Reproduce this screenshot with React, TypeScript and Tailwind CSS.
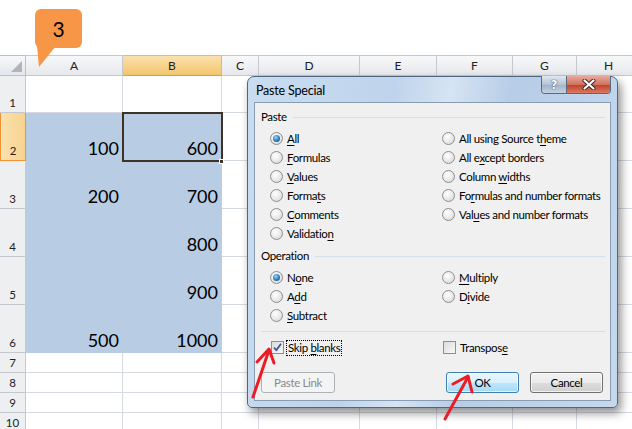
import React from "react";

const colHeads = ["A", "B", "C", "D", "E", "F", "G", "H"];
const rowHeads = [1, 2, 3, 4, 5, 6, 7, 8, 9, 10];

const data: Record<string, string> = {
  A2: "100",
  A3: "200",
  A6: "500",
  B2: "600",
  B3: "700",
  B4: "800",
  B5: "900",
  B6: "1000",
};

function Acc({ text, u }: { text: string; u?: number }) {
  if (u === undefined) return <>{text}</>;
  return (
    <>
      {text.slice(0, u)}
      <span className="underline decoration-1 underline-offset-[2px]">{text[u]}</span>
      {text.slice(u + 1)}
    </>
  );
}

function Radio({ checked }: { checked?: boolean }) {
  return (
    <span className="flex h-[13px] w-[13px] shrink-0 items-center justify-center rounded-full border border-[#8e8f8f] bg-[radial-gradient(circle_at_40%_35%,#ffffff,#e8e8e8_55%,#cfcfcf)]">
      {checked && (
        <span className="h-[7px] w-[7px] rounded-full bg-[radial-gradient(circle_at_40%_35%,#9ad6f7,#2b7bbb_55%,#164c82)]" />
      )}
    </span>
  );
}

function Check({ checked }: { checked?: boolean }) {
  return (
    <span className="flex h-[13px] w-[13px] shrink-0 items-center justify-center border border-[#8e8f8f] bg-[linear-gradient(135deg,#dcdcdc,#f8f8f8)]">
      {checked && (
        <svg width="11" height="11" viewBox="0 0 11 11">
          <path d="M2 5.5 L4.3 8.3 L9 1.8" fill="none" stroke="#3c5796" strokeWidth="1.8" strokeLinejoin="round" />
        </svg>
      )}
    </span>
  );
}

function RadioRow({ text, u, checked }: { text: string; u?: number; checked?: boolean }) {
  return (
    <div className="flex h-[19px] items-center gap-[4px]">
      <Radio checked={checked} />
      <span className="whitespace-nowrap">
        <Acc text={text} u={u} />
      </span>
    </div>
  );
}

function GroupLabel({ text }: { text: string }) {
  return (
    <div className="flex h-[16px] items-center pr-[5px]">
      <span>{text}</span>
      <span className="ml-[6px] h-px flex-1 bg-[#d5dfe5]" />
    </div>
  );
}

function PasteSpecial() {
  return (
    <div className="absolute left-[247px] top-[76px] flex h-[332px] w-[371px] flex-col rounded-t-[7px] rounded-b-[5px] border border-[#4f6580] bg-[linear-gradient(100deg,#c9dcf0_0%,#bfd4ec_35%,#d6e4f3_48%,#b7cde7_62%,#c5d8ee_100%)] px-[6px] pb-[6px] font-['Lato',sans-serif] text-black shadow-[3px_5px_10px_rgba(0,0,0,0.45)]">
      <div className="flex h-[25px] items-start justify-between">
        <span className="pl-[2px] pt-[5px] text-[12.5px] tracking-[-0.2px]">Paste Special</span>
        <div className="-mt-px flex overflow-hidden rounded-b-[4px] border border-t-0 border-[#5b6b7e]">
          <span className="flex h-[17px] w-[25px] items-center justify-center border-r border-[#5b6b7e] bg-[linear-gradient(#dfe7f0,#b4c4d6_50%,#9fb2c8_51%,#c4d3e3)] font-['DejaVu_Sans',sans-serif] text-[12px] font-bold text-white [text-shadow:0_0_1px_#2d3a4a,0_0_1px_#2d3a4a]">
            ?
          </span>
          <span className="flex h-[17px] w-[43px] items-center justify-center bg-[linear-gradient(#e8a99c,#d0725f_50%,#c0402a_51%,#d97a5f)]">
            <svg width="14" height="11" viewBox="0 0 14 11">
              <path d="M2.5 1.5 L11.5 9.5 M11.5 1.5 L2.5 9.5" stroke="#3a2320" strokeWidth="4" strokeLinecap="round" />
              <path d="M2.5 1.5 L11.5 9.5 M11.5 1.5 L2.5 9.5" stroke="#ffffff" strokeWidth="2.2" strokeLinecap="round" />
            </svg>
          </span>
        </div>
      </div>
      <div className="flex flex-1 flex-col border border-[#8a9cb2] bg-[#f0f0f0] pl-[6px] pt-[6px] text-[11.5px] tracking-[-0.35px]">
        <GroupLabel text="Paste" />
        <div className="mt-[4px] grid grid-cols-[172px_1fr] pl-[9px]">
          <div className="flex flex-col">
            <RadioRow text="All" u={0} checked />
            <RadioRow text="Formulas" u={0} />
            <RadioRow text="Values" u={0} />
            <RadioRow text="Formats" u={5} />
            <RadioRow text="Comments" u={0} />
            <RadioRow text="Validation" u={9} />
          </div>
          <div className="flex flex-col">
            <RadioRow text="All using Source theme" u={18} />
            <RadioRow text="All except borders" u={5} />
            <RadioRow text="Column widths" u={7} />
            <RadioRow text="Formulas and number formats" u={2} />
            <RadioRow text="Values and number formats" u={3} />
          </div>
        </div>
        <div className="mt-[5px]">
          <GroupLabel text="Operation" />
        </div>
        <div className="mt-[4px] grid grid-cols-[172px_1fr] pl-[9px]">
          <div className="flex flex-col">
            <RadioRow text="None" u={1} checked />
            <RadioRow text="Add" u={1} />
            <RadioRow text="Subtract" u={0} />
          </div>
          <div className="flex flex-col">
            <RadioRow text="Multiply" u={0} />
            <RadioRow text="Divide" u={1} />
          </div>
        </div>
        <div className="mr-[5px] mt-[6px] h-px bg-[#d5dfe5]" />
        <div className="mt-[6px] grid h-[19px] grid-cols-[172px_1fr] pl-[10px]">
          <div className="flex items-center gap-[2px]">
            <Check checked />
            <span className="border border-dotted border-black px-px leading-[14px]">
              <Acc text="Skip blanks" u={5} />
            </span>
          </div>
          <div className="flex items-center gap-[4px]">
            <Check />
            <span>
              <Acc text="Transpose" u={8} />
            </span>
          </div>
        </div>
        <div className="mt-[15px] flex h-[21px] pr-[7px]">
          <button className="w-[74px] rounded-[3px] border border-[#adb2b5] bg-[#f4f4f4] text-[#8a8a8a]">
            Paste Link
          </button>
          <button className="ml-auto w-[73px] rounded-[3px] border border-[#3c7fb1] bg-[linear-gradient(#eaf6fd,#d9f0fc_50%,#bee6fd_51%,#a7d9f5)] shadow-[inset_0_0_0_1px_rgba(255,255,255,0.7)]">
            OK
          </button>
          <button className="ml-[11px] w-[73px] rounded-[3px] border border-[#707070] bg-[linear-gradient(#f2f2f2,#ebebeb_50%,#dddddd_51%,#cfcfcf)] shadow-[inset_0_0_0_1px_rgba(255,255,255,0.7)]">
            Cancel
          </button>
        </div>
      </div>
    </div>
  );
}

export default function App() {
  return (
    <div className="relative h-[429px] w-[632px] overflow-hidden bg-white font-['Lato',sans-serif]">
      <div className="h-[55px]" />
      <div className="grid grid-cols-[26px_97px_99px_37px_101px_77px_76px_64px_64px] grid-rows-[21px_37px_48px_48px_48px_48px_48px_20px_20px_20px_20px]">
        <div className="relative border-y border-r border-[#bcc1c8] bg-[linear-gradient(#f7f8f9,#e3e6ea)]">
          <svg className="absolute bottom-[3px] right-[3px]" width="11" height="11" viewBox="0 0 11 11">
            <path d="M11 0 L11 11 L0 11 Z" fill="#b0b4ba" />
          </svg>
        </div>
        {colHeads.map((c) =>
          c === "B" ? (
            <div
              key={c}
              className="flex items-center justify-center border-y border-r border-b-[#f29436] border-r-[#f2b458] border-t-[#bcc1c8] bg-[linear-gradient(#fae1ae,#f3c56b)] text-[12px] text-[#222]"
            >
              {c}
            </div>
          ) : (
            <div
              key={c}
              className="flex items-center justify-center border-y border-r border-[#c5c9cf] bg-[linear-gradient(#f7f8f9,#e6e8ec)] text-[12px] text-[#222]"
            >
              {c}
            </div>
          )
        )}
        {rowHeads.map((r) => (
          <React.Fragment key={r}>
            {r === 2 ? (
              <div className="flex items-end justify-center border border-t-0 border-[#f29436] bg-[linear-gradient(90deg,#fae1ae,#f7d390)] pb-[3px] text-[11.5px] leading-[12px] text-[#222]">
                {r}
              </div>
            ) : (
              <div className="flex items-end justify-center border-b border-r border-[#c5c9cf] bg-[#eeeff1] pb-[3px] text-[11.5px] leading-[12px] text-[#222]">
                {r}
              </div>
            )}
            {colHeads.map((c) => {
              const sel = (c === "A" || c === "B") && r >= 2 && r <= 6;
              const v = data[c + r];
              return sel ? (
                <div
                  key={c}
                  className="flex items-end justify-end border-b border-r border-[#b8cce4] bg-[#b8cce4] pb-[3px] pr-[3px] text-[18px] leading-[18px] text-black"
                >
                  {v}
                </div>
              ) : (
                <div key={c} className="border-b border-r border-[#d4d9e2] bg-white" />
              );
            })}
          </React.Fragment>
        ))}
      </div>

      {/* active cell B2 */}
      <div className="absolute left-[122px] top-[112px] h-[50px] w-[101px] border-2 border-[#3f3224]" />
      <div className="absolute left-[219px] top-[159px] h-[5px] w-[5px] border border-white bg-[#3f3224]" />

      {/* callout badge */}
      <div className="absolute left-[35px] top-[9px] flex h-[39px] w-[47px] items-center justify-center rounded-[6px] bg-[#f79646] text-[21px] text-black">
        3
      </div>
      <svg className="pointer-events-none absolute left-0 top-0" width="100" height="80">
        <polygon points="37,46 56,46 39,67" fill="#f79646" />
      </svg>

      <PasteSpecial />

      {/* red arrows */}
      <svg className="pointer-events-none absolute left-0 top-0" width="632" height="429">
        <g fill="none" stroke="#ec1c24" strokeWidth="3" strokeLinecap="round" strokeLinejoin="round">
          <path d="M253 397 L269 350" />
          <path d="M257 362 L269 349 L274 363" />
          <path d="M445 419 L468 377" />
          <path d="M453 384 L468 376 L472 392" />
        </g>
      </svg>
    </div>
  );
}
